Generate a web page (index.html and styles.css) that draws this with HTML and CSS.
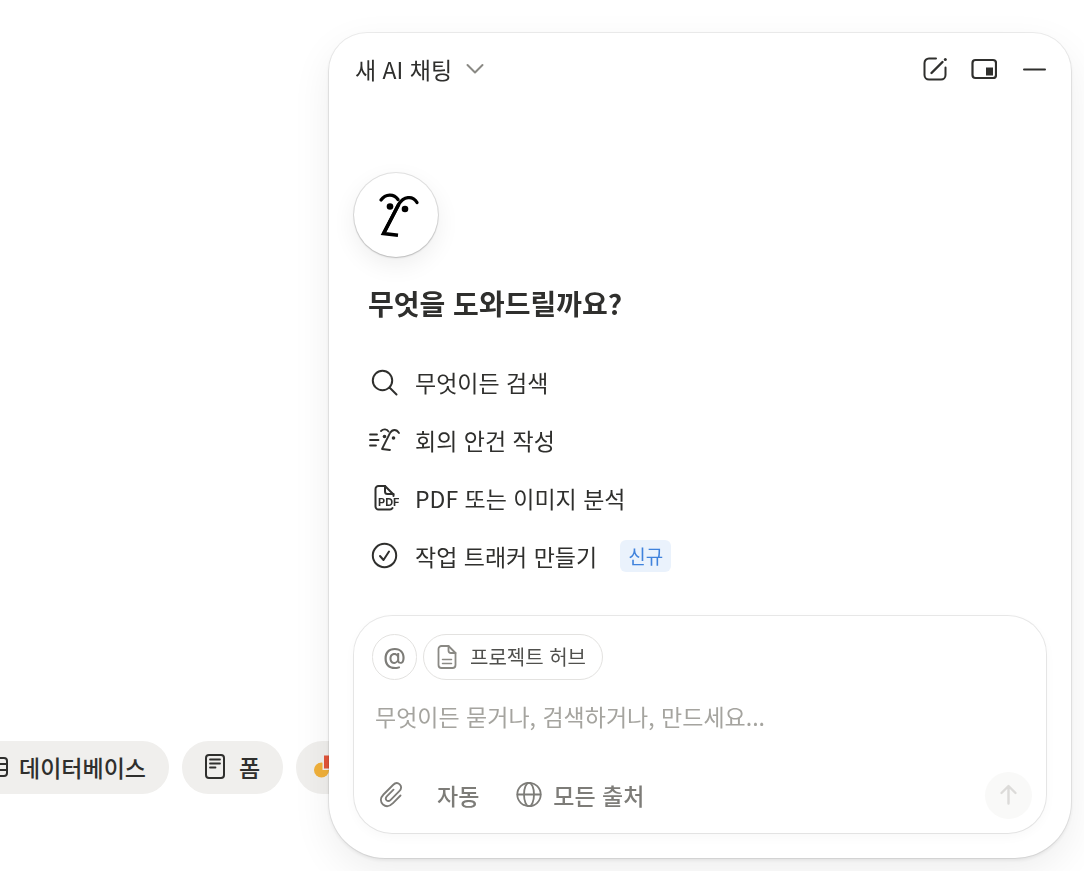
FILE: index.html
```html
<!DOCTYPE html>
<html lang="ko">
<head>
  <meta charset="UTF-8">
  <meta name="viewport" content="width=device-width, initial-scale=1">
  <title>새 AI 채팅</title>
  <link rel="stylesheet" href="styles.css">
</head>
<body>
  <main class="page">
    <div class="templates">
      <button class="pill" type="button">
        <svg class="icon" width="24" height="24" viewBox="0 0 24 24" stroke-width="2">
          <rect x="2" y="3" width="21" height="18" rx="3"/>
          <path d="M2 9h21M2 15h21M9 9v12"/>
        </svg>
        데이터베이스
      </button>
      <button class="pill" type="button">
        <svg class="icon" width="24" height="26" viewBox="0 0 24 26" stroke-width="2">
          <rect x="2" y="1" width="18" height="23" rx="3"/>
          <path d="M6 5.500h10M6 9.500h10M6 13.500h5.500" stroke-width="1.800"/>
        </svg>
        폼
      </button>
      <button class="pill" type="button" aria-label="더보기">
        <svg class="shapes" width="36" height="26" viewBox="0 0 36 26">
          <circle cx="3.500" cy="16" r="7.500" fill="#f0b03a"/>
          <rect x="4.500" y="0" width="23" height="16" fill="#f0efed"/>
          <rect x="6" y="1.500" width="20" height="13" fill="#e3553b"/>
        </svg>
      </button>
    </div>
  </main>

  <section class="chat">
    <header class="chat-header">
      <button class="chat-title" type="button">
        새 AI 채팅
        <svg class="icon muted" width="18" height="12" viewBox="0 0 18 12" stroke-width="2">
          <path d="M1.500 2l7.500 7.500L16.500 2"/>
        </svg>
      </button>
      <div class="chat-actions">
        <button type="button" aria-label="새 채팅">
          <svg class="icon" width="26" height="26" viewBox="0 0 26 26" stroke-width="2">
            <path d="M15 2.500H8A4.500 4.500 0 0 0 3.500 7v12A4.500 4.500 0 0 0 8 23.500h12a4.500 4.500 0 0 0 4.500-4.500v-7.500"/>
            <path d="M10.500 17L21.500 6" stroke-width="2.400"/>
            <circle cx="24.300" cy="3.500" r="1.500" fill="currentColor" stroke="none"/>
          </svg>
        </button>
        <button type="button" aria-label="보기 전환">
          <svg class="icon" width="27" height="26" viewBox="0 0 27 26" stroke-width="2.200">
            <rect x="2.500" y="4" width="23.500" height="18" rx="3"/>
            <path d="M16 11.500h7v8h-7z" fill="currentColor" stroke="none"/>
          </svg>
        </button>
        <button type="button" aria-label="최소화">
          <svg class="icon" width="26" height="26" viewBox="0 0 26 26" stroke-width="2">
            <path d="M4 13.500h21"/>
          </svg>
        </button>
      </div>
    </header>

    <div class="avatar">
      <svg width="84" height="84" viewBox="0 0 84 84" fill="none" stroke="#000" stroke-width="3.300" stroke-linecap="round">
        <path d="M27 27c4.500-6.500 13-6.500 17-.5"/>
        <path d="M63 29.500c-4.500-7.500-13.500-6-18.500 2L30 60"/>
        <path d="M45 31L29.500 60.500l14.500 1.700" stroke-linecap="butt" stroke-width="3.600"/>
        <circle cx="36" cy="33.500" r="3.300" fill="#000" stroke="none"/>
        <circle cx="51" cy="36" r="3.300" fill="#000" stroke="none"/>
      </svg>
    </div>
    <h1>무엇을 도와드릴까요?</h1>

    <ul class="suggestions">
      <li>
        <button type="button">
          <svg class="icon" width="32" height="30" viewBox="0 0 32 30" stroke-width="2">
            <circle cx="13.500" cy="13.500" r="9.700"/>
            <path d="M20.500 20.500l7 7"/>
          </svg>
          무엇이든 검색
        </button>
      </li>
      <li>
        <button type="button">
          <svg class="icon" width="32" height="30" viewBox="0 0 32 30" stroke-width="1.800">
            <path d="M1 9.500h7M1 15h8.500M1 20.500h6"/>
            <path d="M12 6c2.500-2.500 6-2 7.500.5M30 8c-2.500-4-6.500-4-9 0L13 24l8 1"/>
            <circle cx="15.500" cy="11.500" r="1.800" fill="currentColor" stroke="none"/>
            <circle cx="24.500" cy="13" r="1.800" fill="currentColor" stroke="none"/>
          </svg>
          회의 안건 작성
        </button>
      </li>
      <li>
        <button type="button">
          <svg class="icon" width="32" height="30" viewBox="0 0 32 30" stroke-width="2">
            <path d="M6.500 14V6a3 3 0 0 1 3-3H16l8.500 8.500V13M6.500 14v9.500a3 3 0 0 0 3 3h11.500a3 3 0 0 0 2.500-1.500"/>
            <path d="M16 3v5.500a2.500 2.500 0 0 0 2.500 2.500h6"/>
            <path d="M8.500 15h23.500v8.500H8.500z" fill="#fff" stroke="none"/>
            <text class="icon-label" x="9" y="23">PDF</text>
          </svg>
          PDF 또는 이미지 분석
        </button>
      </li>
      <li>
        <button type="button">
          <svg class="icon" width="32" height="30" viewBox="0 0 32 30" stroke-width="2">
            <circle cx="15.500" cy="14.500" r="11.700"/>
            <path d="M11 15l3.500 4L20 10.500"/>
          </svg>
          작업 트래커 만들기
          <span class="badge">신규</span>
        </button>
      </li>
    </ul>

    <form class="composer">
      <div class="context">
        <button class="mention" type="button" aria-label="멘션">@</button>
        <button class="source" type="button">
          <svg class="icon muted" width="20" height="24" viewBox="0 0 20 24" stroke-width="1.800">
            <path d="M11.500 1H4.500A3 3 0 0 0 1.500 4v16a3 3 0 0 0 3 3h11a3 3 0 0 0 3-3V8z"/>
            <path d="M11.500 1v4.500A2.500 2.500 0 0 0 14 8h4.500"/>
            <path d="M5.500 14.500h9M5.500 18.500h9" stroke-width="1.500"/>
          </svg>
          프로젝트 허브
        </button>
      </div>
      <textarea rows="1" aria-label="메시지" placeholder="무엇이든 묻거나, 검색하거나, 만드세요..."></textarea>
      <div class="toolbar">
        <button class="attach" type="button" aria-label="파일 첨부">
          <svg class="icon" width="26" height="28" viewBox="0 0 26 28" stroke-width="1.800">
            <path d="M22.500 14.500l-7.500 7.600c-3.500 3.500-7 4-10 1.400-3-2.800-2.800-6.600.5-10L15 4c2.200-2.200 4.800-2.400 6.700-.6 1.900 1.900 1.700 4.500-.4 6.700l-8.600 8.700c-1.400 1.400-3 1.500-4.100.5-1.100-1.100-1-2.700.4-4.100l6.500-6.500"/>
          </svg>
        </button>
        <button type="button">자동</button>
        <button class="scope" type="button">
          <svg class="icon" width="26" height="26" viewBox="0 0 26 26" stroke-width="1.800">
            <circle cx="13" cy="12.500" r="11.700"/>
            <ellipse cx="13" cy="12.500" rx="5" ry="11.700"/>
            <path d="M1.500 12.500h23"/>
          </svg>
          모든 출처
        </button>
        <button class="send" type="submit" aria-label="보내기" disabled>
          <svg class="icon" width="20" height="22" viewBox="0 0 20 22" stroke-width="2.400">
            <path d="M9.500 19.500V2.500M2.500 9L9.500 2l7 7"/>
          </svg>
        </button>
      </div>
    </form>
  </section>
</body>
</html>
```
FILE: styles.css
```css
* {
  box-sizing: border-box;
}
body {
  margin: 0;
  background: #fff;
  color: #2f2f2d;
  font-family: "Noto Sans CJK KR", "Noto Sans", sans-serif;
  font-size: 23px;
  line-height: 34px;
}
button {
  display: flex;
  align-items: center;
  padding: 0;
  border: none;
  background: none;
  color: inherit;
  font: inherit;
  white-space: nowrap;
  cursor: pointer;
}
.icon {
  flex: none;
  fill: none;
  stroke: currentColor;
  stroke-linecap: round;
  stroke-linejoin: round;
}
.muted {
  color: #8a8984;
}

/* Page behind the chat */
.page {
  display: flex;
  flex-direction: column;
  justify-content: flex-end;
  min-height: 100vh;
  padding-bottom: 77px;
  overflow: hidden;
}
.templates {
  display: flex;
  gap: 13px;
  margin-left: -38px;
}
.pill {
  gap: 11px;
  height: 53px;
  padding: 0 23px 2px 22px;
  border-radius: 27px;
  background: #f0efed;
  font-weight: 500;
}
.shapes {
  overflow: visible;
}

/* Chat window */
.chat {
  position: fixed;
  right: 13px;
  bottom: 13px;
  width: 742px;
  max-width: calc(100vw - 26px);
  padding: 0 25px 25px;
  border-radius: 38px 38px 56px 56px;
  background: #fff;
  box-shadow: 0 0 0 1px rgba(0, 0, 0, 0.07), 0 2px 4px rgba(0, 0, 0, 0.09), 0 14px 40px rgba(0, 0, 0, 0.07);
}
.chat-header {
  display: flex;
  align-items: center;
  justify-content: space-between;
  height: 72px;
}
.chat-title {
  gap: 14px;
  margin-left: 1px;
}
.chat-actions {
  display: flex;
  gap: 23px;
}
.avatar {
  width: 84px;
  height: 84px;
  margin-top: 68px;
  border-radius: 50%;
  background: #fff;
  box-shadow: 0 0 0 1px rgba(0, 0, 0, 0.1), 0 1px 2px rgba(0, 0, 0, 0.15), 0 8px 24px rgba(0, 0, 0, 0.07);
}
h1 {
  margin: 28px 0 32px 14px;
  font-size: 28px;
  font-weight: 700;
  line-height: 36px;
}
.suggestions {
  margin: 0 0 31px;
  padding: 0 0 0 15px;
  list-style: none;
}
.suggestions button {
  gap: 14px;
  width: 100%;
  height: 58px;
}
.icon-label {
  fill: currentColor;
  stroke: none;
  font: 700 11px "Inter", sans-serif;
}
.badge {
  margin-left: 9px;
  padding: 0 8px;
  border-radius: 6px;
  background: #eaf2fc;
  color: #3f82dc;
  font-size: 19px;
  line-height: 32px;
}

/* Message box */
.composer {
  padding: 18px 14px 14px 18px;
  border-radius: 38px;
  box-shadow: 0 0 0 1px rgba(0, 0, 0, 0.09), 0 4px 12px rgba(0, 0, 0, 0.03);
}
.context {
  display: flex;
  gap: 6px;
}
.mention,
.source {
  height: 46px;
  border: 1px solid #e3e2e0;
  border-radius: 23px;
}
.mention {
  justify-content: center;
  width: 45px;
  padding-bottom: 3px;
  color: #7d7c78;
  font-family: "Inter", sans-serif;
  font-weight: 500;
}
.source {
  gap: 13px;
  padding: 0 16px 0 13px;
  color: #50504d;
  font-size: 20px;
}
textarea {
  display: block;
  width: 100%;
  height: 92px;
  padding: 19px 3px;
  border: none;
  outline: none;
  background: none;
  color: inherit;
  font: inherit;
  resize: none;
}
textarea::placeholder {
  color: #a5a49f;
}
.toolbar {
  display: flex;
  align-items: center;
  color: #7d7c78;
  font-weight: 500;
}
.toolbar button {
  padding-bottom: 1px;
}
.attach {
  margin: 0 33px 0 6px;
}
.scope {
  gap: 11px;
  margin-left: 37px;
}
.send {
  justify-content: center;
  width: 47px;
  height: 47px;
  margin-left: auto;
  border-radius: 50%;
  background: #f9f9f8;
  color: #dcdbd9;
}
```
